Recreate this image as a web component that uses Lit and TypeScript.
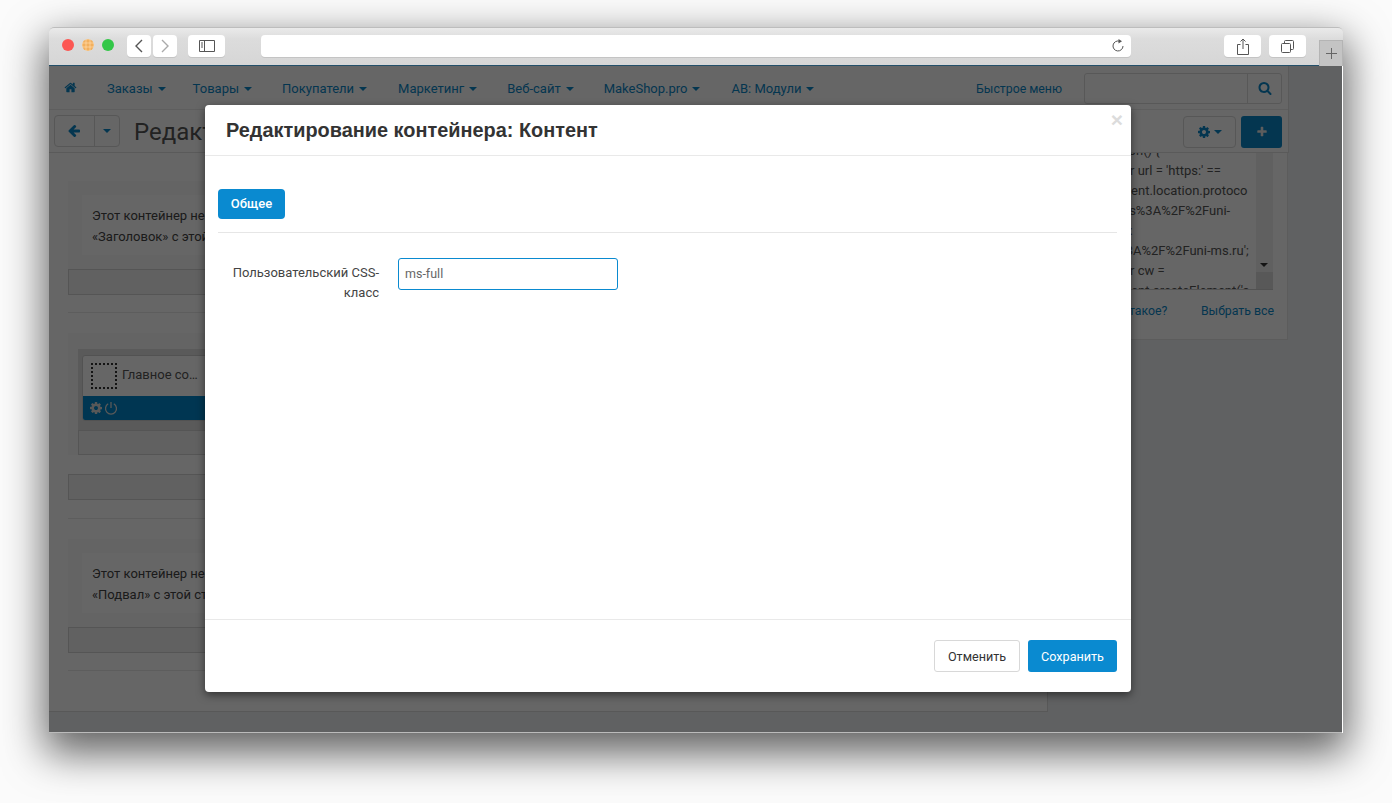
import { LitElement, html, css, svg } from "lit";
import { customElement } from "lit/decorators.js";

const fa = (d: unknown, size: number, vb = "0 0 1792 1792") => html`<svg class="fa" width=${size} height=${size} viewBox=${vb} fill="currentColor">${svg`<path d=${d as string}></path>`}</svg>`;
const HOME = "M1472 992v480q0 26-19 45t-45 19h-384v-384H768v384H384q-26 0-45-19t-19-45V992q0-1 .5-3t.5-3l575-474 575 474q1 2 1 6zm223-69l-62 74q-8 9-21 11h-3q-13 0-21-7L896 424l-692 577q-12 8-24 7-13-2-21-11l-62-74q-8-10-7-23.500t11-21.500l719-599q32-26 76-26t76 26l244 204V288q0-14 9-23t23-9h192q14 0 23 9t9 23v408l219 182q10 8 11 21.500t-7 23.500z";
const SEARCH = "M1216 832q0-185-131.500-316.500T768 384 451.500 515.500 320 832t131.500 316.500T768 1280t316.500-131.500T1216 832zm512 832q0 52-38 90t-90 38q-54 0-90-38l-343-342q-179 124-399 124-143 0-273.500-55.500t-225-150-150-225T64 832t55.500-273.500 150-225 225-150T768 128t273.500 55.500 225 150 150 225T1472 832q0 220-124 399l343 343q37 37 37 90z";
const COG = "M1152 896q0-106-75-181t-181-75-181 75-75 181 75 181 181 75 181-75 75-181zm512-109v222q0 12-8 23t-20 13l-185 28q-19 54-39 91 35 50 107 138 10 12 10 25t-9 23q-27 37-99 108t-94 71q-12 0-26-9l-138-108q-44 23-91 38-16 136-29 186-7 28-36 28H785q-14 0-24.500-8.500T749 1634l-28-184q-49-16-90-37l-141 107q-10 9-25 9-14 0-25-11-126-114-165-168-7-10-7-23 0-12 8-23 15-21 51-66.500t54-70.500q-27-50-41-99l-183-27q-13-2-21-12.500T128 1006V784q0-12 8-23t19-13l186-28q14-46 39-92-40-57-107-138-10-12-10-24 0-10 9-23 26-36 98.500-107.500T465 264q13 0 26 10l138 107q44-23 91-38 16-136 29-186 7-28 36-28h222q14 0 24.500 8.500T1043 159l28 184q49 16 90 37l142-107q9-9 24-9 13 0 25 10 129 119 165 170 7 8 7 22 0 12-8 23-15 21-51 66.500t-54 70.500q26 50 41 98l183 28q13 2 21 12.500t8 23.500z";
const ARROW = "M1536 832v128q0 53-32.500 90.500T1419 1088H715l293 294q38 36 38 90t-38 90l-75 76q-37 37-90 37-52 0-91-37L101 987q-37-37-37-91 0-53 37-91l651-650q38-38 91-38 52 0 90 38l75 74q38 38 38 91t-38 91L715 704h704q52 0 84.500 37.500T1536 832z";
const PLUS = "M1600 736v192q0 40-28 68t-68 28h-416v416q0 40-28 68t-68 28H800q-40 0-68-28t-28-68v-416H288q-40 0-68-28t-28-68V736q0-40 28-68t68-28h416V224q0-40 28-68t68-28h192q40 0 68 28t28 68v416h416q40 0 68 28t28 68z";

const NAV = [["Заказы", 27], ["Товары", 30], ["Покупатели", 31], ["Маркетинг", 30], ["Веб-сайт", 30], ["MakeShop.pro", 31], ["АВ: Модули", 0]] as [string, number][];
const CODE = ["(function() {", "        var url = 'https:' ==", "document.location.protoco", "    'https%3A%2F%2Funi-", "ms.ru' :", "'http%3A%2F%2Funi-ms.ru';", "        var cw =", "document.createElement('s"];

@customElement("app-root")
export class AppRoot extends LitElement {
  static styles = css`
    :host { display: block; width: 1392px; height: 803px; box-sizing: border-box; padding: 27px 49px 70px; background: #fbfbfb; overflow: hidden; font-family: Roboto, sans-serif; }
    * { box-sizing: border-box; }
    .fa { display: block; flex: none; }
    .window { height: 706px; display: flex; flex-direction: column; border-radius: 5px 5px 0 0; box-shadow: 0 16px 42px 4px rgba(0,0,0,.62); background: #fff; }
    .titlebar { height: 39px; flex: none; display: flex; align-items: flex-start; padding: 7px 0 0 13px; border-radius: 5px 5px 0 0; background: linear-gradient(#eaeaea, #dcdcdc 30%, #d6d6d6); border-bottom: 1px solid #24506a; border-top: 1px solid #bdbdbd; }
    .lights { display: flex; gap: 8px; margin: 4px 0 0; }
    .light { width: 12px; height: 12px; border-radius: 50%; }
    .red { background: #fc5753; } .yellow { background: radial-gradient(#f2b05f 1px, #fbc98a 2px); background-size: 4px 4px; } .green { background: #33c748; }
    .tb { height: 22px; background: #fff; border-radius: 4px; display: flex; align-items: center; justify-content: center; box-shadow: 0 1px 0 #c4c4c4; color: #555; flex: none; }
    .back { width: 24px; margin-left: 13px; } .forward { width: 24px; margin-left: 2px; color: #aaa; }
    .sidebar { width: 37px; margin-left: 11px; }
    .url { width: 870px; margin-left: 36px; justify-content: flex-end; padding-right: 6px; }
    .share { width: 37px; margin-left: 93px; } .tabs { width: 37px; margin-left: 8px; }
    .newtab { width: 24px; height: 26px; margin: 5px 0 0 13px; background: #c4c4c4; border: 1px solid #b4b4b4; border-bottom: 0; display: flex; align-items: center; justify-content: center; color: #666; }
    .viewport { flex: 1; position: relative; background: #f0f2f6; overflow: hidden; min-height: 0; margin-right: 1px; border-bottom: 1px solid #bbb; }
    .head { width: 1240px; height: 87px; background: #fff; border-right: 1px solid #e2e2e2; border-bottom: 1px solid #e2e2e2; }
    .nav { height: 44px; display: flex; align-items: center; padding: 0 6px 0 15px; color: #0b87c8; font-size: 13px; border-bottom: 1px solid #ececec; }
    .nav .home { margin-right: 30px; width: 13px; }
    .item { display: flex; align-items: center; white-space: nowrap; padding-top: 2px; }
    .caret { width: 0; height: 0; border: 4px solid transparent; border-top-color: currentColor; border-bottom: 0; margin-left: 5px; flex: none; }
    .quick { margin-left: auto; margin-right: 22px; font-size: 12.3px; }
    .search { width: 198px; height: 31px; display: flex; border: 1px solid #ddd; border-radius: 3px; margin-top: 1px; }
    .search div:first-child { flex: 1; border-right: 1px solid #ddd; }
    .search div:last-child { width: 33px; display: flex; align-items: center; justify-content: center; }
    .tools { height: 42px; display: flex; align-items: center; padding: 0 6px 0 5px; }
    .group { display: flex; height: 32px; border: 1px solid #d9d9d9; border-radius: 4px; color: #0b87c8; }
    .group > div { display: flex; align-items: center; justify-content: center; }
    .g1 { width: 40px; border-right: 1px solid #d9d9d9; } .g2 { width: 24px; }
    .page-title { font-size: 24px; color: #555; margin-left: 14px; padding-top: 2px; white-space: nowrap; }
    .gear { width: 53px; margin-left: auto; margin-top: 2px; gap: 3px; }
    .gear > div { width: 100%; gap: 3px; }
    .tcaret { margin: 0; }
    .add { width: 41px; height: 32px; margin: 2px 0 0 5px; background: #0b87c8; color: #e8e8e8; border-radius: 3px; display: flex; align-items: center; justify-content: center; }
    .row { display: flex; align-items: flex-start; }
    .main { width: 999px; height: 559px; background: #fff; border-right: 1px solid #ddd; border-bottom: 1px solid #ddd; padding: 28px 20px 0 19px; font-size: 13px; color: #444; }
    .block { display: flow-root; border-bottom: 1px solid #e8e8e8; padding-bottom: 17px; margin-bottom: 20px; }
    .block.mid { padding-bottom: 18px; }
    .zone { padding: 14px 14px 14px 14px; background: #f9f9f9; }
    .hint { padding: 10px 10px 9px; height: 60px; line-height: 21px; background: #fff; white-space: nowrap; }
    .bar { height: 26px; background: #f2f2f2; border: 1px solid #d4d4d4; }
    .outer { margin-left: 0; padding-left: 10px; padding-top: 16px; background: #f9f9f9; }
    .frame { background: #e2e2e2; padding: 6px 4px 9px 4px; }
    .widget { background: #fff; border: 1px solid #ccc; border-radius: 3px; height: 66px; overflow: hidden; }
    .w-head { height: 40px; display: flex; align-items: center; padding: 0 8px; gap: 5px; font-size: 13px; color: #555; }
    .w-name { padding-bottom: 3px; }
    .dots { width: 26px; height: 26px; border: 2px dotted #333; flex: none; }
    .w-foot { height: 25px; background: #0088cc; color: #ddd; display: flex; align-items: center; padding-left: 6px; padding-bottom: 2px; gap: 1px; }
    .bar.in { height: 25px; margin-bottom: 19px; }
    .side { width: 220px; margin-left: 20px; height: 187px; background: #fff; border: 1px solid #e6e6e6; border-top: 0; padding: 0 14px; }
    .code { height: 137px; overflow: hidden; position: relative; font: 13px/20px Roboto, sans-serif; color: #555; white-space: pre; padding-left: 8px; border-bottom: 1px solid #ccc; }
    .lines { margin-top: -12px; }
    .scroll { position: absolute; right: 0; top: 0; bottom: 0; width: 17px; background: #f1f1f1; }
    .scroll i { position: absolute; left: 4px; bottom: 22px; border: 4px solid transparent; border-top-color: #333; border-bottom: 0; }
    .scroll b { position: absolute; left: 0; right: 0; bottom: 0; height: 17px; background: #dcdcdc; }
    .links { display: flex; justify-content: space-between; margin-top: 14px; color: #0b87c8; font-size: 12.3px; padding-right: 0; margin-right: -1px; }
    .overlay { position: absolute; inset: 0 -1px 0 0; background: rgba(0,0,0,.6); padding: 39px 0 0 156px; }
    .modal { width: 926px; height: 587px; background: #fff; border-radius: 4px; box-shadow: 0 3px 9px rgba(0,0,0,.5); display: flex; flex-direction: column; position: relative; }
    .m-head { height: 51px; flex: none; border-bottom: 1px solid #e9e9e9; display: flex; align-items: center; padding: 0 21px; }
    .m-head h3 { margin: 0; font: bold 19.9px/24px "Liberation Sans", Arial, sans-serif; color: #333; }
    .close { position: absolute; right: 8px; top: 4px; font: bold 21px/21px "Liberation Sans", sans-serif; color: #dcdcdc; }
    .m-body { flex: 1; padding: 33px 14px 0 13px; }
    .pill { display: inline-flex; align-items: center; justify-content: center; width: 67px; height: 30px; padding-bottom: 2px; background: #0a8ad0; color: #fff; border-radius: 4px; font-size: 13px; font-weight: 500; }
    .tabs-line { border-bottom: 1px solid #e6e6e6; height: 44px; }
    .form { display: flex; margin-top: 25px; }
    .label { width: 161px; padding-top: 5px; padding-left: 10px; text-align: right; font-size: 13px; line-height: 20px; color: #444; }
    .input { width: 220px; height: 32px; margin-left: 19px; border: 1px solid #0a8ad0; border-radius: 3px; font-size: 12.5px; color: #666; display: flex; align-items: center; padding: 0 0 2px 6px; }
    .m-foot { height: 73px; flex: none; border-top: 1px solid #e9e9e9; display: flex; justify-content: flex-end; gap: 8px; padding: 20px 14px 0 0; }
    .btn { height: 32px; display: flex; align-items: center; justify-content: center; border-radius: 3px; font-size: 12.6px; }
    .cancel { width: 86px; border: 1px solid #d8d8d8; color: #333; }
    .save { width: 89px; background: #0a8ad0; color: #fff; }
  `;

  render() {
    return html`
      <div class="window">
        <div class="titlebar">
          <div class="lights"><div class="light red"></div><div class="light yellow"></div><div class="light green"></div></div>
          <div class="tb back"><svg width="10" height="14" viewBox="0 0 10 14" fill="none" stroke="currentColor" stroke-width="1.4"><path d="M8 1 2 7l6 6"/></svg></div>
          <div class="tb forward"><svg width="10" height="14" viewBox="0 0 10 14" fill="none" stroke="currentColor" stroke-width="1.4"><path d="m2 1 6 6-6 6"/></svg></div>
          <div class="tb sidebar"><svg width="16" height="12" viewBox="0 0 16 12" fill="none" stroke="currentColor"><path d="M.5.5h15v11H.5zM5.500.5v11M2 3h2M2 5h2M2 7h2"/></svg></div>
          <div class="tb url"><svg width="14" height="14" viewBox="0 0 14 14" fill="none" stroke="currentColor"><path d="M8.500 2.200A5 5 0 1 0 12 7"/><path d="M7.500 0v4.500L11 2.200z" fill="currentColor" stroke="none"/></svg></div>
          <div class="tb share"><svg width="12" height="17" viewBox="0 0 12 17" fill="none" stroke="currentColor"><path d="M3.500 6.500h-3v10h11v-10h-3M6 11V1M3.500 3.500 6 1l2.500 2.500"/></svg></div>
          <div class="tb tabs"><svg width="13" height="13" viewBox="0 0 13 13" fill="none" stroke="currentColor"><path d="M3.500 3V1.500a1 1 0 0 1 1-1h7a1 1 0 0 1 1 1v7a1 1 0 0 1-1 1H10"/><rect x=".5" y="3.500" width="9" height="9" rx="1"/></svg></div>
          <div class="newtab"><svg width="11" height="11" viewBox="0 0 11 11" stroke="currentColor"><path d="M5.500 0v11M0 5.500h11"/></svg></div>
        </div>
        <div class="viewport">
          <div class="head">
            <div class="nav">
              <div class="home">${fa(HOME, 13)}</div>
              ${NAV.map(([n, gap]) => html`<div class="item" style="margin-right:${gap}px">${n}<span class="caret"></span></div>`)}
              <div class="item quick">Быстрое меню</div>
              <div class="search"><div></div><div>${fa(SEARCH, 14)}</div></div>
            </div>
            <div class="tools">
              <div class="group"><div class="g1">${fa(ARROW, 14)}</div><div class="g2"><span class="caret tcaret"></span></div></div>
              <div class="page-title">Редактирование макета</div>
              <div class="group gear"><div>${fa(COG, 14)}<span class="caret tcaret"></span></div></div>
              <div class="add">${fa(PLUS, 12)}</div>
            </div>
          </div>
          <div class="row">
            <div class="main">
              <div class="block">
                <div class="zone"><div class="hint">Этот контейнер не используется. Создайте контейнер<br>«Заголовок» с этой страницы</div></div>
                <div class="bar"></div>
              </div>
              <div class="block mid">
                <div class="outer">
                  <div class="frame"><div class="widget"><div class="w-head"><div class="dots"></div><span class="w-name">Главное со…</span></div><div class="w-foot">${fa(COG, 14)}<svg width="14" height="14" viewBox="0 0 14 14" fill="none" stroke="currentColor" stroke-width="1.300"><path d="M4.200 2.800a5.500 5.500 0 1 0 5.600 0M7 1v6"/></svg></div></div></div>
                  <div class="bar in"></div>
                </div>
                <div class="bar"></div>
              </div>
              <div class="block">
                <div class="zone"><div class="hint">Этот контейнер не используется. Создайте контейнер<br>«Подвал» с этой страницы</div></div>
                <div class="bar"></div>
              </div>
            </div>
            <div class="side">
              <div class="code"><div class="lines">${CODE.map((l) => html`<div>${l}</div>`)}</div><div class="scroll"><i></i><b></b></div></div>
              <div class="links"><span>Что это такое?</span><span>Выбрать все</span></div>
            </div>
          </div>
          <div class="overlay">
            <div class="modal">
              <div class="m-head"><h3>Редактирование контейнера: Контент</h3><div class="close">×</div></div>
              <div class="m-body">
                <div class="tabs-line"><div class="pill">Общее</div></div>
                <div class="form">
                  <div class="label">Пользовательский CSS-класс</div>
                  <div class="input">ms-full</div>
                </div>
              </div>
              <div class="m-foot"><div class="btn cancel">Отменить</div><div class="btn save">Сохранить</div></div>
            </div>
          </div>
        </div>
      </div>
    `;
  }
}
